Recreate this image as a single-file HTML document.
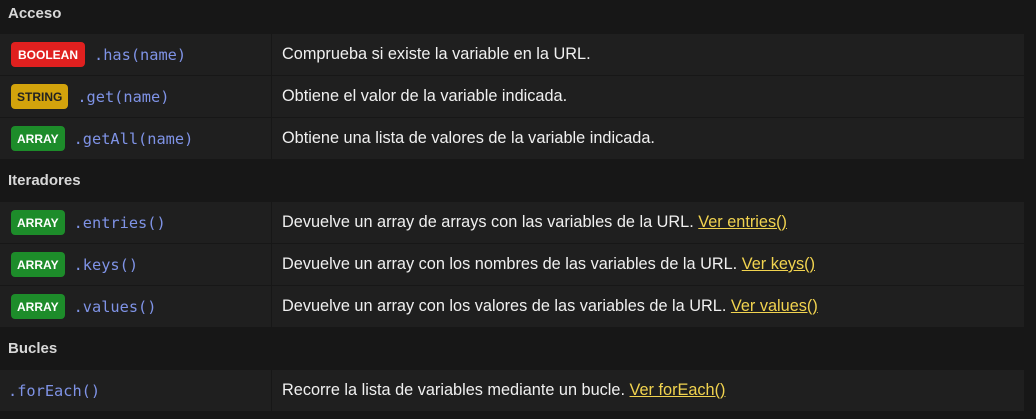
<!DOCTYPE html><html><head><style>
body{margin:0;background:#171717;width:1036px;height:419px;overflow:hidden;font-family:"Liberation Sans",sans-serif;}
.t{position:absolute;left:0;top:0;width:1024px;}
.h{height:34px;line-height:28px;color:#d8d8d8;font-weight:bold;font-size:15px;padding-left:8px;box-sizing:border-box;}
.r{height:42px;background:#1f1f1f;border-bottom:1px solid #171717;box-sizing:border-box;display:flex;align-items:center;}
.c1{width:272px;height:100%;border-right:1px solid #171717;display:flex;align-items:center;padding-left:11px;box-sizing:border-box;}
.c2{padding-left:10px;color:#f0f0f0;font-size:16.3px;}
.b{display:inline-flex;align-items:center;justify-content:center;font-size:12px;font-weight:bold;border-radius:4px;padding:0 6px;height:25px;margin-right:9px;}
.red{background:#e0201f;color:#fff}.yel{background:#d3a30c;color:#222}.grn{background:#1d8c2a;color:#fff}
.m{font-family:"DejaVu Sans Mono","Liberation Mono",monospace;color:#7f93e6;font-size:15.3px;}
a{color:#f1d34f;text-decoration:underline;}
</style></head><body><div class="t">
<div class="h">Acceso</div>
<div class="r"><div class="c1"><span class="b red" style="padding:0 7px">BOOLEAN</span><span class="m">.has(name)</span></div><div class="c2">Comprueba si existe la variable en la URL.</div></div>
<div class="r"><div class="c1"><span class="b yel">STRING</span><span class="m">.get(name)</span></div><div class="c2">Obtiene el valor de la variable indicada.</div></div>
<div class="r"><div class="c1"><span class="b grn">ARRAY</span><span class="m">.getAll(name)</span></div><div class="c2">Obtiene una lista de valores de la variable indicada.</div></div>
<div class="h" style="height:42px;line-height:42px">Iteradores</div>
<div class="r"><div class="c1"><span class="b grn">ARRAY</span><span class="m">.entries()</span></div><div class="c2">Devuelve un array de arrays con las variables de la URL. <a>Ver entries()</a></div></div>
<div class="r"><div class="c1"><span class="b grn">ARRAY</span><span class="m">.keys()</span></div><div class="c2">Devuelve un array con los nombres de las variables de la URL. <a>Ver keys()</a></div></div>
<div class="r"><div class="c1"><span class="b grn">ARRAY</span><span class="m">.values()</span></div><div class="c2">Devuelve un array con los valores de las variables de la URL. <a>Ver values()</a></div></div>
<div class="h" style="height:42px;line-height:42px">Bucles</div>
<div class="r"><div class="c1" style="padding-left:8px"><span class="m">.forEach()</span></div><div class="c2">Recorre la lista de variables mediante un bucle. <a>Ver forEach()</a></div></div>
</div></body></html>
